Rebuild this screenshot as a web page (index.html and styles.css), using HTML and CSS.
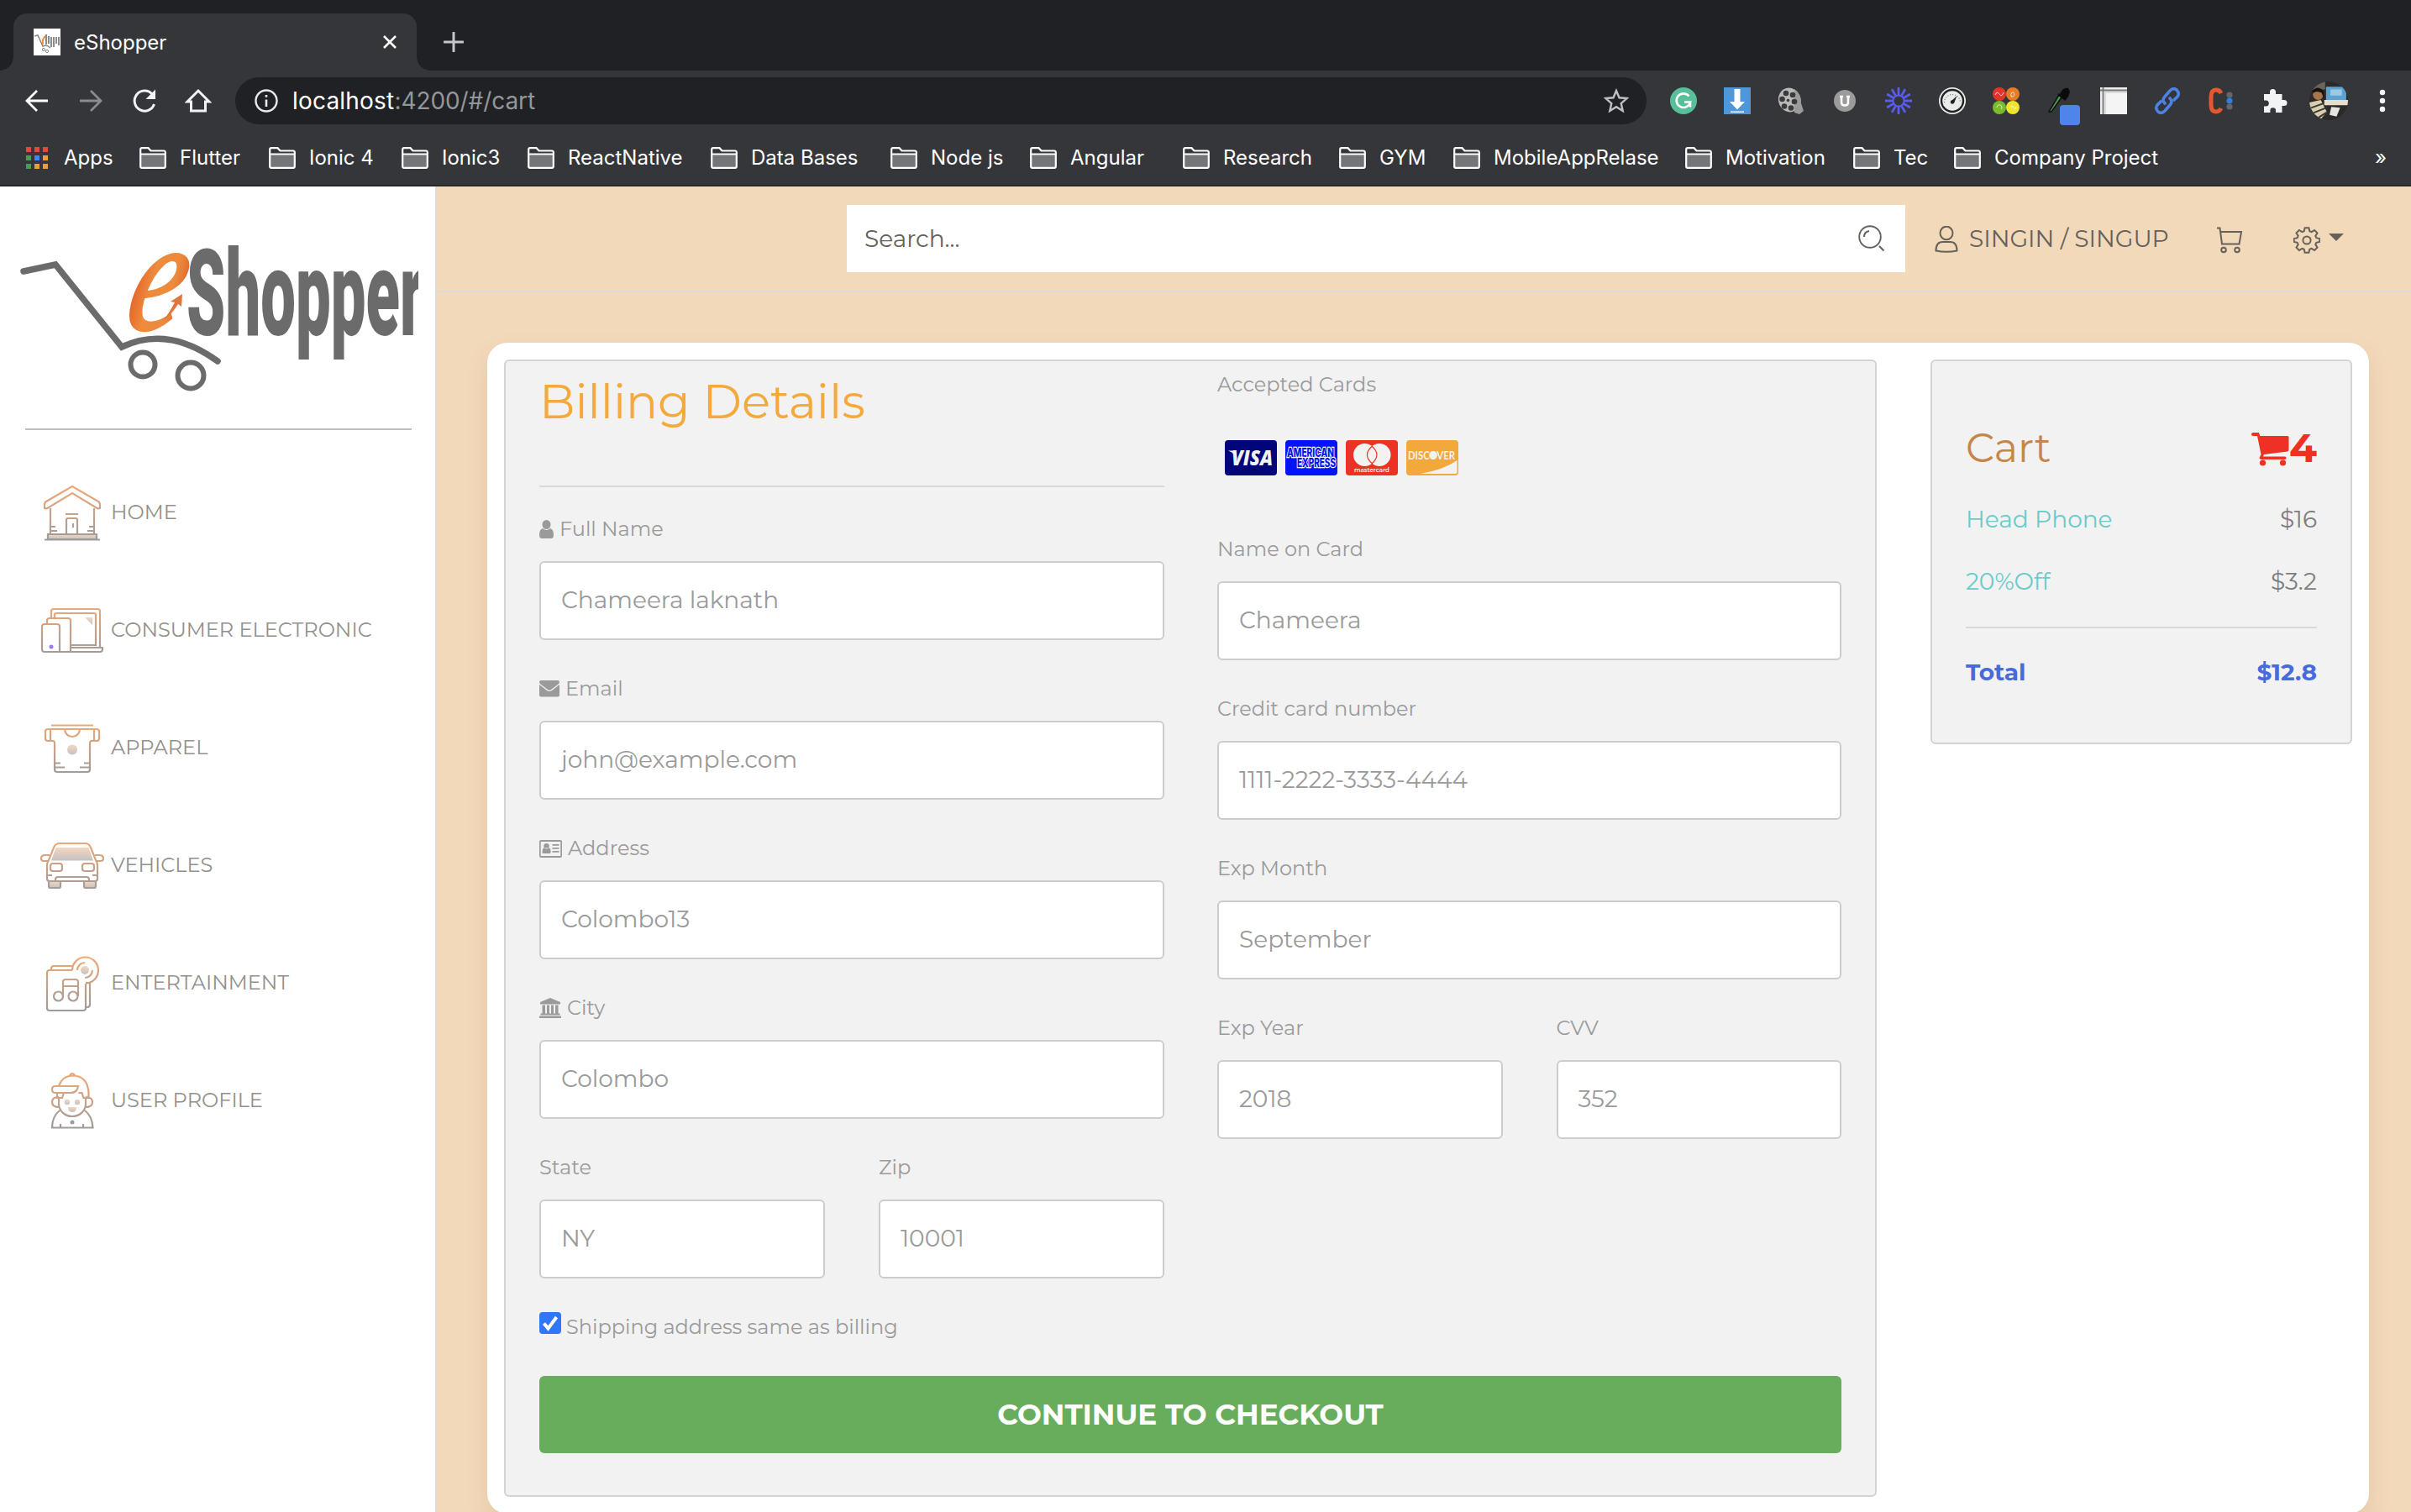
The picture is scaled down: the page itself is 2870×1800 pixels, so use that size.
FILE: index.html
```
<!DOCTYPE html>
<html lang="en">
<head>
<meta charset="utf-8">
<title>eShopper</title>
<link rel="stylesheet" href="styles.css">
</head>
<body>
<svg class="defs" width="0" height="0" aria-hidden="true">
  <defs>
    <linearGradient id="warm" gradientUnits="userSpaceOnUse" x1="0" y1="12" x2="0" y2="72">
      <stop offset="0" stop-color="#efa877"/><stop offset="1" stop-color="#9f9b9b"/>
    </linearGradient>
    <linearGradient id="soft" x1="0" y1="0" x2="0" y2="1">
      <stop offset="0" stop-color="#f6d6bd"/><stop offset="1" stop-color="#c4c2c2"/>
    </linearGradient>
    <linearGradient id="ember" x1="0" y1="0" x2="1" y2="0">
      <stop offset="0" stop-color="#e4632a"/><stop offset=".35" stop-color="#ee8b3c"/><stop offset=".75" stop-color="#ec8b3d"/><stop offset="1" stop-color="#df6a2f"/>
    </linearGradient>
    <symbol id="folder" viewBox="0 0 32 26">
      <path d="M1.2 8.5h29.6v16.3H1.2z" fill="#747578"/>
      <path d="M1.2 24V3q0-1.8 1.8-1.8h7.5l3 3.3H29q1.8 0 1.8 1.8V23q0 1.8-1.8 1.8H3q-1.8 0-1.8-1.8zM1.2 8.5h29.6" fill="none" stroke="#fff" stroke-width="2.2"/>
    </symbol>
  </defs>
</svg>

<header class="browser">
  <div class="tabstrip">
    <div class="tab">
      <svg class="favicon" viewBox="0 0 32 32"><path fill="#fff" d="M0 0h32v32H0z"/><path d="M1 9l4-1 6 13q5-2 9 2" fill="none" stroke="#888" stroke-width="1.5"/><circle cx="12" cy="25" r="1.6" fill="none" stroke="#888"/><circle cx="16" cy="27" r="1.6" fill="none" stroke="#888"/><path d="M14 9q-4 3-3 10" fill="none" stroke="#ee8b3c" stroke-width="2"/><path d="M15 7v12M18 9v9M21 10v12M24 10v12M27 10v8M30 10v10" stroke="#8a8a8a" stroke-width="2"/></svg>
      <span class="tab-title">eShopper</span>
      <svg class="tab-close" viewBox="0 0 16 16"><path d="M1 1l14 14M15 1L1 15" stroke="#fff" stroke-width="2.6"/></svg>
    </div>
    <svg class="tab-new" viewBox="0 0 24 24"><path d="M12 1v22M1 12h22" stroke="#c4c7c9" stroke-width="3" stroke-linecap="round"/></svg>
  </div>
  <div class="toolbar">
    <svg class="nav-btn" viewBox="0 0 32 32"><path d="M29 16H5M16 4L4 16l12 12" fill="none" stroke="#fff" stroke-width="2.8"/></svg>
    <svg class="nav-btn" viewBox="0 0 32 32"><path d="M3 16h24M16 4l12 12-12 12" fill="none" stroke="#8a8b8e" stroke-width="2.8"/></svg>
    <svg class="nav-btn" viewBox="0 0 32 32"><path d="M27.500 20A12 12 0 1 1 25 8" fill="none" stroke="#f1f3f4" stroke-width="3"/><path d="M29 2.500V14H17.500z" fill="#f1f3f4"/></svg>
    <svg class="nav-btn" viewBox="0 0 32 32"><path d="M3 17L16 4l13 13h-4.500v11h-17V17z" fill="none" stroke="#f1f3f4" stroke-width="3"/></svg>
    <div class="omnibox">
      <svg class="info" viewBox="0 0 28 28"><circle cx="14" cy="14" r="12.500" fill="none" stroke="#e8eaed" stroke-width="2.400"/><path d="M14 12.500V21M14 7v2.800" stroke="#e8eaed" stroke-width="2.600"/></svg>
      <span class="url"><b>localhost</b>:4200/#/cart</span>
      <svg class="star" viewBox="0 0 30 30"><path d="M15 3l3.500 8.300 9 .8-6.800 6 2 8.800-7.700-4.700-7.700 4.700 2-8.800-6.800-6 9-.8z" fill="none" stroke="#bdc1c6" stroke-width="2.400"/></svg>
    </div>
    <div class="extensions">
      <svg viewBox="0 0 32 32"><circle cx="16" cy="16" r="16" fill="#57bf99"/><path d="M22.500 10.500a8.300 8.300 0 1 0 1.600 7H17M24 17.500v6" fill="none" stroke="#fff" stroke-width="2.600"/></svg>
      <svg viewBox="0 0 32 32"><path fill="#4f97d9" d="M0 0h32v32H0z"/><path fill="#fff" d="M12.500 2h7v15H25l-9 9.500L7 17h5.500zM8 28.500h16V30H8z"/></svg>
      <svg viewBox="0 0 32 32"><ellipse cx="14" cy="15" rx="13" ry="14.500" fill="#b9b9b9" transform="rotate(-15 14 15)"/><path d="M20 2q9 6 8 17l3 9-5 4-6-2z" fill="#9b9b9b"/><g fill="#3b3b3b"><circle cx="10" cy="7" r="3.300"/><circle cx="18" cy="9" r="3.300"/><circle cx="5.500" cy="14" r="3.300"/><circle cx="8" cy="22.500" r="3.300"/><circle cx="16" cy="24.500" r="3.300"/><circle cx="20" cy="17" r="3.300"/><circle cx="12.500" cy="15.500" r="1.800"/></g></svg>
      <svg viewBox="0 0 32 32"><circle cx="16" cy="16" r="13" fill="#9b9b9b"/><path d="M12 11v6.500q0 4 4 4t4-4V11M10 11h4M18 11h4" fill="none" stroke="#fff" stroke-width="2.600"/></svg>
      <svg viewBox="0 0 32 32"><g stroke="#5b5bf0" stroke-width="2.800"><path d="M16 0v10M16 22v10M0 16h10M22 16h10"/><path d="M16 0v10M16 22v10M0 16h10M22 16h10" transform="rotate(30 16 16)"/><path d="M16 0v10M16 22v10M0 16h10M22 16h10" transform="rotate(60 16 16)"/></g><circle cx="16" cy="16" r="6.500" fill="none" stroke="#5b5bf0" stroke-width="2"/></svg>
      <svg viewBox="0 0 32 32"><circle cx="16" cy="16" r="16" fill="#e9ebea"/><circle cx="16" cy="16" r="13" fill="#e9ebea" stroke="#222" stroke-width="2.400"/><path d="M6.500 18a9.500 9.500 0 0 1 19 0" fill="none" stroke="#777" stroke-width="1.200" stroke-dasharray="1 2"/><path d="M21.500 10L18 19l-4-2z" fill="#222"/><circle cx="16" cy="17.500" r="2.200" fill="#222"/></svg>
      <svg viewBox="0 0 32 32"><circle cx="8" cy="8" r="8" fill="#e3342c"/><circle cx="24" cy="8" r="8" fill="#e87c26"/><circle cx="8" cy="24" r="8" fill="#79bb2b"/><circle cx="24" cy="24" r="8" fill="#eee42f"/><g fill="none" stroke="#fff" stroke-width="1" opacity=".75"><path d="M3 9q2-5 5-1t5-2M22 11q-1-6 3-5 2 4-1 5zM5 24a3 3 0 1 1 5 2M21 24q2-4 4 0t3-1"/></g></svg>
      <svg class="picker" viewBox="0 0 40 46"><path d="M3 30L15 10l3 3L6 30z" fill="#4a9a4a" stroke="#111" stroke-width="1.500"/><path d="M14 9l9 7M17 10q3-8 8-7 4 3-2 11z" fill="#0b0b0b" stroke="#0b0b0b" stroke-width="2.500"/><rect x="16" y="22" width="24" height="24" rx="4" fill="#4f84ea"/></svg>
      <svg viewBox="0 0 32 32"><path fill="#ededed" d="M0 0h32v32H0z"/><path d="M5 5h27v27H5z" fill="#dcdcdc"/><path d="M7 7h25v25H7z" fill="#f4f4f4"/><path d="M0 3.500h32M3.500 0v32" stroke="#777" stroke-width="1.800"/></svg>
      <svg viewBox="0 0 32 32"><g fill="none" stroke="#4b82e4" stroke-width="3.600" stroke-linecap="round"><path d="M13 19q-4-4 0-8l6-7q4-4 8-1 4 4 1 8l-4 4"/><path d="M19 13q4 4 0 8l-6 7q-4 4-8 1-4-4-1-8l4-4"/></g></svg>
      <svg viewBox="0 0 32 32"><path d="M16 7q-2-4-6-4-6 0-6 8v10q0 8 6 8 4 0 6-4" fill="none" stroke="#e4572f" stroke-width="5"/><circle cx="26" cy="9" r="3.600" fill="#63666b"/><circle cx="26" cy="16" r="3.600" fill="#2f7de0"/><circle cx="26" cy="23" r="3.600" fill="#63666b"/></svg>
      <svg viewBox="0 0 32 32"><path fill="#f1f3f4" d="M3 8h7V5.500a3.500 3.500 0 0 1 7 0V8h7.500v7H27a3.500 3.500 0 0 1 0 7h-2.500v8H17v-2.500a3.300 3.300 0 0 0-6.600 0V30H3v-7.500h2.300a3.500 3.500 0 0 0 0-7H3z"/></svg>
      <svg class="avatar" viewBox="0 0 44 44"><clipPath id="face"><circle cx="22" cy="22" r="22"/></clipPath><g clip-path="url(#face)"><path fill="#2b2a28" d="M0 0h44v44H0z"/><path fill="#6b665c" d="M0 0h18v9H0z"/><path fill="#5ea2d0" d="M19 6h23v15H19z"/><path fill="#9cc9e6" d="M24 9h13v7H24z"/><path fill="#e8dfca" d="M17 21h27v6H17z"/><circle cx="10" cy="15" r="6" fill="#a9754f"/><path d="M3 12q6-9 13-1l1 10-3-8q-6-3-9 0z" fill="#17110e"/><path fill="#d9cfae" d="M0 24l13-3 7 14-8 9H0z"/><path d="M2 30l14-5M4 36l15-6M9 42l11-7" stroke="#3c3a36" stroke-width="2"/><path fill="#e5e4e0" d="M25 29l10 1-4 10-8-2z"/></g></svg>
      <svg viewBox="0 0 32 32"><g fill="#f1f3f4"><circle cx="16" cy="6" r="3.200"/><circle cx="16" cy="16" r="3.200"/><circle cx="16" cy="26" r="3.200"/></g></svg>
    </div>
  </div>
  <nav class="bookmarks">
    <span class="bm"><svg class="apps" viewBox="0 0 26 26"><path fill="#e2483d" d="M0 0h6v6H0zM10 0h6v6h-6zM20 0h6v6h-6z"/><path fill="#4b9c57" d="M0 10h6v6H0zM0 20h6v6H0z"/><path fill="#4285f4" d="M10 10h6v6h-6z"/><path fill="#e8a033" d="M20 10h6v6h-6zM10 20h6v6h-6zM20 20h6v6h-6z"/></svg>Apps</span>
    <span class="bm"><svg class="fold"><use href="#folder"/></svg>Flutter</span>
    <span class="bm"><svg class="fold"><use href="#folder"/></svg>Ionic 4</span>
    <span class="bm"><svg class="fold"><use href="#folder"/></svg>Ionic3</span>
    <span class="bm"><svg class="fold"><use href="#folder"/></svg>ReactNative</span>
    <span class="bm"><svg class="fold"><use href="#folder"/></svg>Data Bases</span>
    <span class="bm"><svg class="fold"><use href="#folder"/></svg>Node js</span>
    <span class="bm"><svg class="fold"><use href="#folder"/></svg>Angular</span>
    <span class="bm"><svg class="fold"><use href="#folder"/></svg>Research</span>
    <span class="bm"><svg class="fold"><use href="#folder"/></svg>GYM</span>
    <span class="bm"><svg class="fold"><use href="#folder"/></svg>MobileAppRelase</span>
    <span class="bm"><svg class="fold"><use href="#folder"/></svg>Motivation</span>
    <span class="bm"><svg class="fold"><use href="#folder"/></svg>Tec</span>
    <span class="bm"><svg class="fold"><use href="#folder"/></svg>Company Project</span>
    <span class="more">»</span>
  </nav>
</header>

<div class="app">
  <aside class="sidebar">
    <svg class="logo" viewBox="0 222 498 288">
      <g fill="none" stroke="#6b6b6c">
        <path d="M28 323l38-8 79 98q55-26 114 17" stroke-width="7.500" stroke-linecap="round"/>
        <circle cx="170" cy="434" r="14.500" stroke-width="6"/>
        <circle cx="227" cy="447" r="15.500" stroke-width="6"/>
      </g>
      <text class="logo-e" transform="translate(145 392) skewX(-14) scale(.76 1)" fill="url(#ember)">e</text>
      <path d="M217 350l-1 15-4-3q-8 13-18 20 9-12 14-22l-5-1z" fill="#e2763a"/>
      <text class="logo-word" x="222" y="399" textLength="282" lengthAdjust="spacingAndGlyphs" fill="#6b6b6c">Shopper</text>
    </svg>
    <ul class="menu">
      <li><svg viewBox="0 0 80 80" class="mi"><path d="M40 10L9 28q-2 1-2 4v4q3 1 5-1l28-17 28 17q2 2 5 1v-4q0-3-2-4zM14 36v31M66 36v31M32 43h15M33 67V50q0-2 2-2h9q2 0 2 2v17M41 54v5M14 58h6M14 63h8M66 58h-6M66 63h-8"/><path d="M11 67h58v6H11z" class="tint"/><path d="M7 73.500h66"/></svg>HOME</li>
      <li><svg viewBox="0 0 80 80" class="mi"><path d="M15 27v-8q0-3 3-3h52q3 0 3 3v44M19 27v-4q0-2 2-2h45q2 0 2 2v36H38M10 34v-4q0-3 3-3h22q3 0 3 3v37M4 64V37q0-3 3-3h15q3 0 3 3v30M4 64q0 3 3 3h66q3 0 3-3v-2H38"/><path d="M55 26h9v9z" fill="url(#soft)" stroke="none"/><circle cx="15" cy="61" r="2.500" fill="#9a7cf5" stroke="none"/></svg>CONSUMER ELECTRONIC</li>
      <li><svg viewBox="0 0 80 80" class="mi"><path d="M19 36q0-3-2-3h-6q-3 0-3-3v-8q0-3 3-3h58q3 0 3 3v8q0 3-3 3h-6q-2 0-2 3v31q0 3-3 3H22q-3 0-3-3zM15 14.500h50M14 19v14M66 19v14M31 19a9 9 0 0 0 18 0M19 59.500h7M19 64.500h12M61 59.500h-7M61 64.500H49"/><circle cx="40" cy="43.500" r="6" class="plain"/></svg>APPAREL</li>
      <li><svg viewBox="0 0 80 80" class="mi"><path d="M20.500 20h39L65 35.500H15z" class="plain"/><path d="M10 57V41q0-3 2-6l6-15q2-5 7-5h30q5 0 7 5l6 15q2 3 2 6v16q0 3-3 3H13q-3 0-3-3zM13 29H8q-5 0-5 4 0 3 3 3h5M67 29h5q5 0 5 4 0 3-3 3h-5M17 39h8q3 0 3 3v3q0 3-3 3h-8q-3 0-3-3v-3q0-3 3-3zM55 39h8q3 0 3 3v3q0 3-3 3h-8q-3 0-3-3v-3q0-3 3-3zM10 53h6M70 53h-6M20 60v-2q0-3 3-3h34q3 0 3 3v2"/><path d="M12 60h14v6q0 2-2 2H14q-2 0-2-2zM54 60h14v6q0 2-2 2H56q-2 0-2-2z" class="tint"/></svg>VEHICLES</li>
      <li><svg viewBox="0 0 80 80" class="mi"><path d="M40 26H13q-3 0-3 3v42q0 3 3 3h40q3 0 3-3V42M15 26v-2q0-3 3-3h23M56 41h5v26q0 3-3 3h-2M40 26A15.500 15.500 0 1 1 56 41.500M46 26a9 9 0 0 1 9-9M64 26a9 9 0 0 1-9 9M29 57V40q0-3 3-3h12q3 0 3 3v17M29 45h18"/><circle cx="23.500" cy="57" r="5.500"/><circle cx="41" cy="57" r="5.500"/><circle cx="55" cy="26" r="5" class="plain"/></svg>ENTERTAINMENT</li>
      <li><svg viewBox="0 0 80 80" class="mi"><path d="M37 11q3-4 6 0M24 24Q28 12 40 11.500q18 0 19.500 20V38h-6l-2-6h-4M47 24H20q-4 0-4 4t4 4h18q8 0 9-8zM22 32v6h6l2-6M24 38v7a16 15 0 0 0 32 0v-7M24 37q-8 0-8 6t8 6M56 37q8 0 8 6t-8 6M25 53q-9 7-9 20.500h48.500Q64 60 55 53M26 73v-4M53 73v-4"/><circle cx="34" cy="43" r="3.200" class="plain"/><circle cx="46" cy="43" r="3.200" class="plain"/><path d="M35 49h10q0 6-5 6t-5-6z" class="plain"/><circle cx="40" cy="67" r="2.500" fill="#9f9b9b" stroke="none"/></svg>USER PROFILE</li>
    </ul>
  </aside>

  <main class="main">
    <div class="topbar">
      <div class="search"><span>Search...</span>
        <svg viewBox="0 0 32 32"><circle cx="14" cy="14" r="12.800" fill="none" stroke="#66615b" stroke-width="1.900"/><path d="M7 14q0-6 6-7M25 25l5.500 5.500" fill="none" stroke="#66615b" stroke-width="2"/></svg>
      </div>
      <a class="login"><svg viewBox="0 0 28 32"><ellipse cx="14" cy="8.500" rx="7.500" ry="7.800"/><path d="M1.500 29.500q0-10.500 8-10.500h9q8 0 8 10.500-12.500 2.500-25 0z"/></svg>SINGIN / SINGUP</a>
      <svg class="cart-ico" viewBox="0 0 32 32"><path d="M1 1.500h3.500L7 20.500h20.500L30 6H5.500"/><circle cx="9" cy="27.500" r="2.800"/><circle cx="25" cy="27.500" r="2.800"/></svg>
      <svg class="gear-ico" viewBox="0 0 32 32"><circle cx="16" cy="16" r="4.600"/><path d="M13.600 1.200h4.800l.9 4 2.300 1 3.500-2.200 3.400 3.400-2.200 3.500 1 2.300 4 .9v3.800l-4 .9-1 2.300 2.200 3.500-3.400 3.400-3.500-2.200-2.300 1-.9 4h-4.800l-.9-4-2.300-1L6.900 28l-3.400-3.400 2.200-3.500-1-2.300-4-.9v-3.800l4-.9 1-2.300-2.200-3.500L6.900 4l3.500 2.200 2.300-1z"/></svg>
      <i class="caret"></i>
    </div>

    <div class="panel">
      <form class="billing">
        <div class="cols">
          <div class="col">
            <h1>Billing Details</h1>
            <hr>
            <div class="field first"><label><svg class="fa fa-user" viewBox="0 0 17 22"><path d="M8.500 0a5 5.500 0 0 1 0 11 5 5.500 0 0 1 0-11zM4 10q4.500 4 9 0 4 1 4 8 0 4-3 4H3q-3 0-3-4 0-7 4-8z"/></svg>Full Name</label><div class="input">Chameera laknath</div></div>
            <div class="field"><label><svg class="fa fa-mail" viewBox="0 0 24 20"><path d="M0 5l9 7q3 2 6 0l9-7v12.500q0 2-2 2H2q-2 0-2-2zM2 0h20q2 0 2 2 0 1.500-2 3l-8 6q-2 1.500-4 0L2 5Q0 3.500 0 2q0-2 2-2z"/></svg>Email</label><div class="input">john@example.com</div></div>
            <div class="field"><label><svg class="fa fa-card" viewBox="0 0 27 21"><path d="M2 0h23q2 0 2 2v17q0 2-2 2H2q-2 0-2-2V2q0-2 2-2zm-.3 2v17h23.600V2zM8.500 4a3 3 0 0 1 0 6.500 3 3 0 0 1 0-6.500zM5.500 9.500h6Q14 10 13.500 15q0 1-1.500 1H5q-1.500 0-1.500-1 0-5 2-5.500zM15.500 5h8v1.800h-8zM15.500 9h8v1.800h-8zM15.500 13h8v1.800h-8z" fill-rule="evenodd"/></svg>Address</label><div class="input">Colombo13</div></div>
            <div class="field"><label><svg class="fa fa-bank" viewBox="0 0 26 24"><path d="M13 0l12 5v2.500H1V5zM3.500 8.500H7v10H3.500zM9 8.500h3v10H9zM14 8.500h3v10h-3zM19 8.500h3.500v10H19zM1.500 18.500h23v2h-23zM0 21.500h26V24H0z"/></svg>City</label><div class="input">Colombo</div></div>
            <div class="pair">
              <div class="field"><label>State</label><div class="input">NY</div></div>
              <div class="field"><label>Zip</label><div class="input">10001</div></div>
            </div>
          </div>
          <div class="col">
            <p class="accepted">Accepted Cards</p>
            <div class="cards">
              <svg viewBox="0 0 62 42"><rect width="62" height="42" rx="4" fill="#00057a"/><text x="8" y="30" textLength="49" lengthAdjust="spacingAndGlyphs" class="visa">VISA</text><path d="M4 12.500h7q2 0 2.500 3l1.500 8q-3-8-11-11z" fill="#f2f2f2"/></svg>
              <svg viewBox="0 0 62 42"><rect width="62" height="42" rx="4" fill="#0013fb"/><text x="2" y="19.500" textLength="56" lengthAdjust="spacingAndGlyphs" class="amex">AMERICAN</text><text x="14" y="32" textLength="46" lengthAdjust="spacingAndGlyphs" class="amex">EXPRESS</text></svg>
              <svg viewBox="0 0 62 42"><rect width="62" height="42" rx="4" fill="#ed3224"/><circle cx="22.500" cy="17.500" r="13.500" fill="#f2f2f2"/><circle cx="40" cy="17.500" r="13.500" fill="#f2f2f2"/><path d="M31.200 7.200q-11.500 10.300 0 20.600 11.500-10.300 0-20.600z" fill="none" stroke="#ed3224" stroke-width="1.200"/><text x="10" y="38" textLength="42" lengthAdjust="spacingAndGlyphs" class="mc">mastercard</text></svg>
              <svg viewBox="0 0 62 42"><rect width="62" height="42" rx="4" fill="#f3a83c"/><path d="M60.500 24v14q0 2-2 2H17q28-5 43.500-16z" fill="#f2f2f2"/><text x="2" y="22.500" textLength="56" lengthAdjust="spacingAndGlyphs" class="disc">DISCOVER</text><circle cx="32" cy="17.800" r="4.800" fill="#f2f2f2"/></svg>
            </div>
            <div class="field"><label>Name on Card</label><div class="input">Chameera</div></div>
            <div class="field"><label>Credit card number</label><div class="input">1111-2222-3333-4444</div></div>
            <div class="field"><label>Exp Month</label><div class="input">September</div></div>
            <div class="pair">
              <div class="field"><label>Exp Year</label><div class="input">2018</div></div>
              <div class="field"><label>CVV</label><div class="input">352</div></div>
            </div>
          </div>
        </div>
        <div class="same"><svg viewBox="0 0 26 26"><rect width="26" height="26" rx="4" fill="#2f77f6"/><path d="M5.500 13.500l5 6L20.500 6" fill="none" stroke="#fff" stroke-width="4"/></svg>Shipping address same as billing</div>
        <div class="checkout">CONTINUE TO CHECKOUT</div>
      </form>

      <section class="summary">
        <div class="row head"><span class="cart-title">Cart</span><span class="count"><svg viewBox="0 0 45 40"><path d="M2 0h7l1.200 4H43q1.500 0 1.500 1.500v15q0 1.500-1.500 2L15 26l-1 2.500h26q1.500 0 1.500 1.500T40 32H12q-2.500 0-2.500-2l2-4L7 4H2Q0 4 0 2t2-2z"/><circle cx="13.500" cy="36" r="3.600"/><circle cx="37.500" cy="36" r="3.600"/></svg>4</span></div>
        <div class="row item"><a>Head Phone</a><span>$16</span></div>
        <div class="row item"><a>20%Off</a><span>$3.2</span></div>
        <hr>
        <div class="row total"><span>Total</span><span>$12.8</span></div>
      </section>
    </div>
  </main>
</div>
</body>
</html>
```
FILE: styles.css
```
* { box-sizing: border-box; }
body {
  margin: 0;
  width: 2870px;
  height: 1800px;
  overflow: hidden;
  background: #f2d9ba;
  font-family: Montserrat, Inter, sans-serif;
  font-weight: 400;
}
svg { display: block; flex: none; }
.defs { position: absolute; }

/* browser chrome */
.browser {
  height: 222px;
  background: #35363a;
  border-bottom: 2px solid #262527;
  font-family: Inter, Roboto, sans-serif;
  color: #fff;
}
.tabstrip {
  height: 84px;
  background: #202124;
  display: flex;
  align-items: flex-end;
  padding-left: 16px;
}
.tab {
  position: relative;
  width: 480px;
  height: 68px;
  background: #35363a;
  border-radius: 16px 16px 0 0;
  display: flex;
  align-items: center;
  padding: 0 24px;
}
.tab::before, .tab::after {
  content: "";
  position: absolute;
  bottom: 0;
  width: 16px;
  height: 16px;
}
.tab::before { left: -16px; background: radial-gradient(circle at 0 0, transparent 15.5px, #35363a 16px); }
.tab::after { right: -16px; background: radial-gradient(circle at 100% 0, transparent 15.5px, #35363a 16px); }
.favicon { width: 32px; height: 32px; }
.tab-title { font-size: 24px; margin-left: 16px; flex: 1; }
.tab-close { width: 16px; height: 16px; }
.tab-new { width: 24px; height: 24px; margin: 0 0 22px 32px; }
.toolbar { height: 72px; display: flex; align-items: center; padding-left: 28px; }
.nav-btn { width: 32px; height: 32px; margin-right: 32px; }
.omnibox {
  width: 1680px;
  height: 56px;
  margin-left: -4px;
  border-radius: 28px;
  background: #202124;
  display: flex;
  align-items: center;
  padding: 0 21px 0 23px;
}
.info { width: 28px; height: 28px; }
.url { flex: 1; margin-left: 17px; font-size: 28px; color: #949699; letter-spacing: -.003em; }
.url b { color: #fff; font-weight: 400; letter-spacing: .007em; }
.star { width: 30px; height: 30px; }
.extensions { display: flex; margin-left: 12px; align-items: center; }
.extensions svg { width: 32px; height: 32px; margin: 0 16px; }
.extensions .picker { width: 40px; height: 46px; margin: 12px 8px 0 16px; }
.extensions .avatar { width: 46px; height: 46px; margin: 0 9px; }
.bookmarks {
  height: 64px;
  padding-left: 31px;
  display: grid;
  grid-template-columns: 135px 154px 158px 150px 218px 214px 166px 182px 186px 136px 276px 200px 120px 501px auto;
  align-items: center;
  font-size: 24px;
  line-height: 30px;
  padding-bottom: 1px;
}
.bm { display: flex; align-items: center; white-space: nowrap; }
.fold { width: 32px; height: 26px; margin-right: 16px; }
.apps { width: 26px; height: 26px; margin-right: 19px; }

/* page shell */
.app { display: flex; height: 1578px; }
.sidebar {
  width: 520px;
  background: #fff;
  border-right: 2px solid #dcdbd9;
}
.logo { width: 498px; height: 288px; }
.logo-e { font: italic 400 190px "Liberation Serif", serif; stroke: url(#ember); stroke-width: 3px; }
.logo-word { font: 900 143px Roboto, sans-serif; }
.menu {
  list-style: none;
  margin: 0 28px 0 30px;
  padding: 27px 0 0 16px;
  border-top: 2px solid #bdbdbd;
}
.menu li {
  height: 140px;
  display: flex;
  align-items: center;
  font-size: 24.05px;
  color: #94908c;
}
.mi { width: 80px; height: 80px; margin-right: 6px; fill: none; stroke: url(#warm); stroke-width: 2.2; }
.tint { fill: url(#soft); }
.plain { fill: url(#soft); stroke: none; }

.main { flex: 1; }
.topbar {
  height: 126px;
  border-bottom: 2px solid #dddbd6;
  display: flex;
  align-items: center;
  padding-left: 488px;
  color: #66615b;
}
.search {
  width: 1260px;
  height: 80px;
  background: #fff;
  display: flex;
  align-items: center;
  justify-content: space-between;
  padding: 0 24px 0 21px;
  font-size: 28px;
}
.search svg { width: 32px; height: 32px; }
.login { display: flex; align-items: center; margin-left: 35px; font-size: 28px; }
.login svg { width: 28px; height: 32px; margin: 2px 13px 0 0; }
.login svg, .cart-ico, .gear-ico { fill: none; stroke: #66615b; stroke-width: 2; }
.cart-ico { width: 32px; height: 32px; margin: 3px 0 0 56px; }
.gear-ico { width: 32px; height: 32px; margin: 3px 0 0 60px; }
.caret { margin: -4px 0 0 10px; border: 9px solid transparent; border-top: 9px solid #66615b; border-bottom: 0; }

.panel {
  margin: 60px 50px 0 60px;
  height: 1394px;
  padding: 20px;
  border-radius: 24px;
  background: #fff;
  box-shadow: 0 12px 24px rgba(180, 130, 70, .18);
  display: flex;
  justify-content: space-between;
  align-items: flex-start;
}
.billing {
  width: 1634px;
  height: 1354px;
  padding: 0 40px;
  border: 2px solid #d3d3d3;
  border-radius: 6px;
  background: #f2f2f2;
  color: #9a9a9a;
  font-size: 24px;
}
.cols { display: grid; grid-template-columns: 744px 743px; gap: 63px; height: 1092px; }
h1 { margin: 14px 0 66px; font-size: 56.3px; line-height: 68px; font-weight: 400; color: #f5a83b; }
hr { margin: 0; border: 0; height: 2px; background: #d8d8d8; }
.field label { display: flex; align-items: center; gap: 7px; height: 96px; padding: 40px 0 20px; line-height: 36px; }
.field.first { margin-top: -8px; }
.fa { fill: #9a9a9a; }
.fa-user { width: 17px; }
.fa-mail { width: 24px; }
.fa-card { width: 27px; }
.fa-bank { width: 26px; }
.input {
  height: 94px;
  line-height: 89px;
  border: 2px solid #ccc;
  border-radius: 6px;
  background: #fff;
  padding-left: 24px;
  font-size: 28px;
}
.pair { display: grid; grid-template-columns: 1fr 1fr; gap: 64px; }
.accepted { margin: 10px 0 48px; line-height: 36px; }
.cards { display: flex; gap: 10px; padding-left: 9px; margin-bottom: 30px; }
.cards svg { width: 62px; height: 42px; }
.cards text { fill: #f2f2f2; }
.visa { font: italic 900 25px "Open Sans", sans-serif; }
.cards .amex { font: 800 14px Inter, sans-serif; fill: #0013fb; stroke: #f2f2f2; stroke-width: 2.4px; paint-order: stroke; }
.mc { font: 600 8px Montserrat, sans-serif; }
.disc { font: 700 13.500px Lato, sans-serif; }
.same { display: flex; height: 36px; line-height: 38px; margin-top: 39px; gap: 6px; }
.same svg { width: 26px; height: 26px; margin-top: 1px; }
.checkout {
  margin-top: 41px;
  height: 92px;
  line-height: 92px;
  border-radius: 6px;
  background: #68ad5b;
  color: #fff;
  text-align: center;
  font-size: 34.200px;
  font-weight: 700;
}

.summary {
  width: 502px;
  height: 458px;
  padding: 73px 40px 0;
  border: 2px solid #d3d3d3;
  border-radius: 6px;
  background: #f2f2f2;
  font-size: 28px;
  line-height: 42px;
}
.row { display: flex; justify-content: space-between; }
.head { height: 60px; line-height: 60px; margin-bottom: 34px; font-size: 48px; }
.cart-title { color: #c5864a; }
.count { display: flex; color: #ee3124; font-weight: 700; }
.count svg { width: 45px; height: 40px; margin-top: 12px; fill: #ee3124; }
.item { height: 74px; color: #7d7d7d; }
.item a { color: #6ccacb; }
.summary hr { margin: 1px 0 31px; }
.total { font-weight: 700; color: #486bdc; }
```
